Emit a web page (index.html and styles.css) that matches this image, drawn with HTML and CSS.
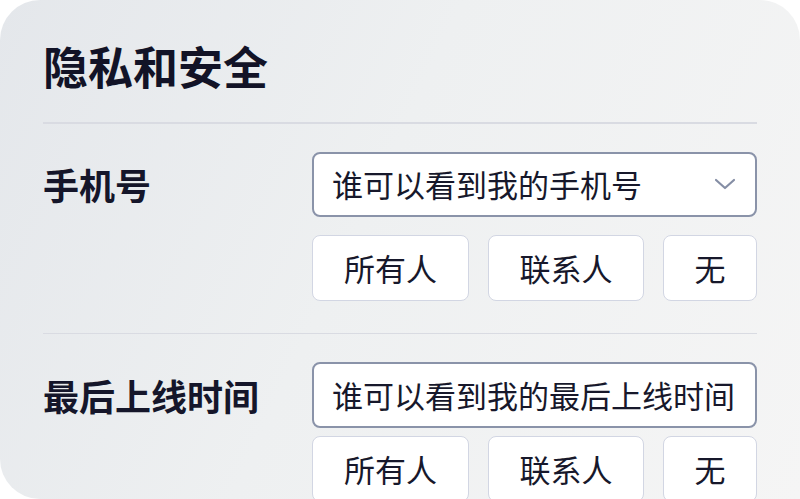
FILE: index.html
```html
<!DOCTYPE html>
<html lang="zh">
<head>
<meta charset="utf-8">
<link rel="stylesheet" href="styles.css">
</head>
<body>
<div class="card">
  <h1 class="title">隐私和安全</h1>
  <div class="divider"></div>
  <section class="row">
    <div class="label">手机号</div>
    <div class="select">
      <span class="select-text">谁可以看到我的手机号</span>
      <svg class="chev" width="22" height="12" viewBox="0 0 22 12"><polyline points="2,2 11,10 20,2" fill="none" stroke="#858ea5" stroke-width="2.2" stroke-linecap="round" stroke-linejoin="round"/></svg>
    </div>
    <div class="options">
      <div class="opt">所有人</div>
      <div class="opt">联系人</div>
      <div class="opt">无</div>
    </div>
  </section>
  <div class="divider d2"></div>
  <section class="row row2">
    <div class="label">最后上线时间</div>
    <div class="select">
      <span class="select-text">谁可以看到我的最后上线时间</span>
    </div>
    <div class="options">
      <div class="opt">所有人</div>
      <div class="opt">联系人</div>
      <div class="opt">无</div>
    </div>
  </section>
</div>
</body>
</html>
```
FILE: styles.css
```css
html, body {
  margin: 0;
  padding: 0;
  background: #ffffff;
}
body {
  width: 800px;
  height: 499px;
  overflow: hidden;
  font-family: "Noto Sans CJK SC", "Noto Sans", sans-serif;
  color: #15162a;
}
.card {
  box-sizing: border-box;
  width: 800px;
  height: 499px;
  border-radius: 40px 40px 0 40px;
  background: linear-gradient(115deg, #e4e7eb 0%, #eef0f1 45%, #f5f5f5 100%);
  padding: 38px 43px 0 43px;
  overflow: hidden;
}
.title {
  margin: 0;
  font-size: 45px;
  line-height: 56px;
  font-weight: 700;
  letter-spacing: 0;
  color: #121327;
}
.divider {
  height: 1.5px;
  background: #d9dbe2;
  margin-top: 28px;
}
.d2 {
  margin-top: 32px;
}
.row {
  display: grid;
  grid-template-columns: 269px 1fr;
  grid-template-rows: 65px 66px;
  row-gap: 18px;
  margin-top: 28px;
}
.row2 {
  row-gap: 8px;
  grid-template-rows: 66px 66px;
}
.label {
  grid-column: 1;
  grid-row: 1;
  align-self: center;
  font-size: 36px;
  font-weight: 700;
  line-height: 44px;
  white-space: nowrap;
}
.select {
  grid-column: 2;
  grid-row: 1;
  box-sizing: border-box;
  border: 2px solid #8a93a9;
  border-radius: 8px;
  background: #ffffff;
  display: flex;
  align-items: center;
  justify-content: space-between;
  padding: 0 19px 0 18px;
  overflow: hidden;
}
.select-text {
  font-size: 31px;
  line-height: 40px;
  white-space: nowrap;
  color: #17182b;
}
.chev {
  flex: none;
}
.options {
  grid-column: 2;
  grid-row: 2;
  display: grid;
  grid-template-columns: 157px 156px 1fr;
  column-gap: 19px;
}
.opt {
  box-sizing: border-box;
  border: 1px solid #d2d6e3;
  border-radius: 8px;
  background: #ffffff;
  display: flex;
  align-items: center;
  justify-content: center;
  font-size: 31px;
  line-height: 40px;
  color: #17182b;
}
```
